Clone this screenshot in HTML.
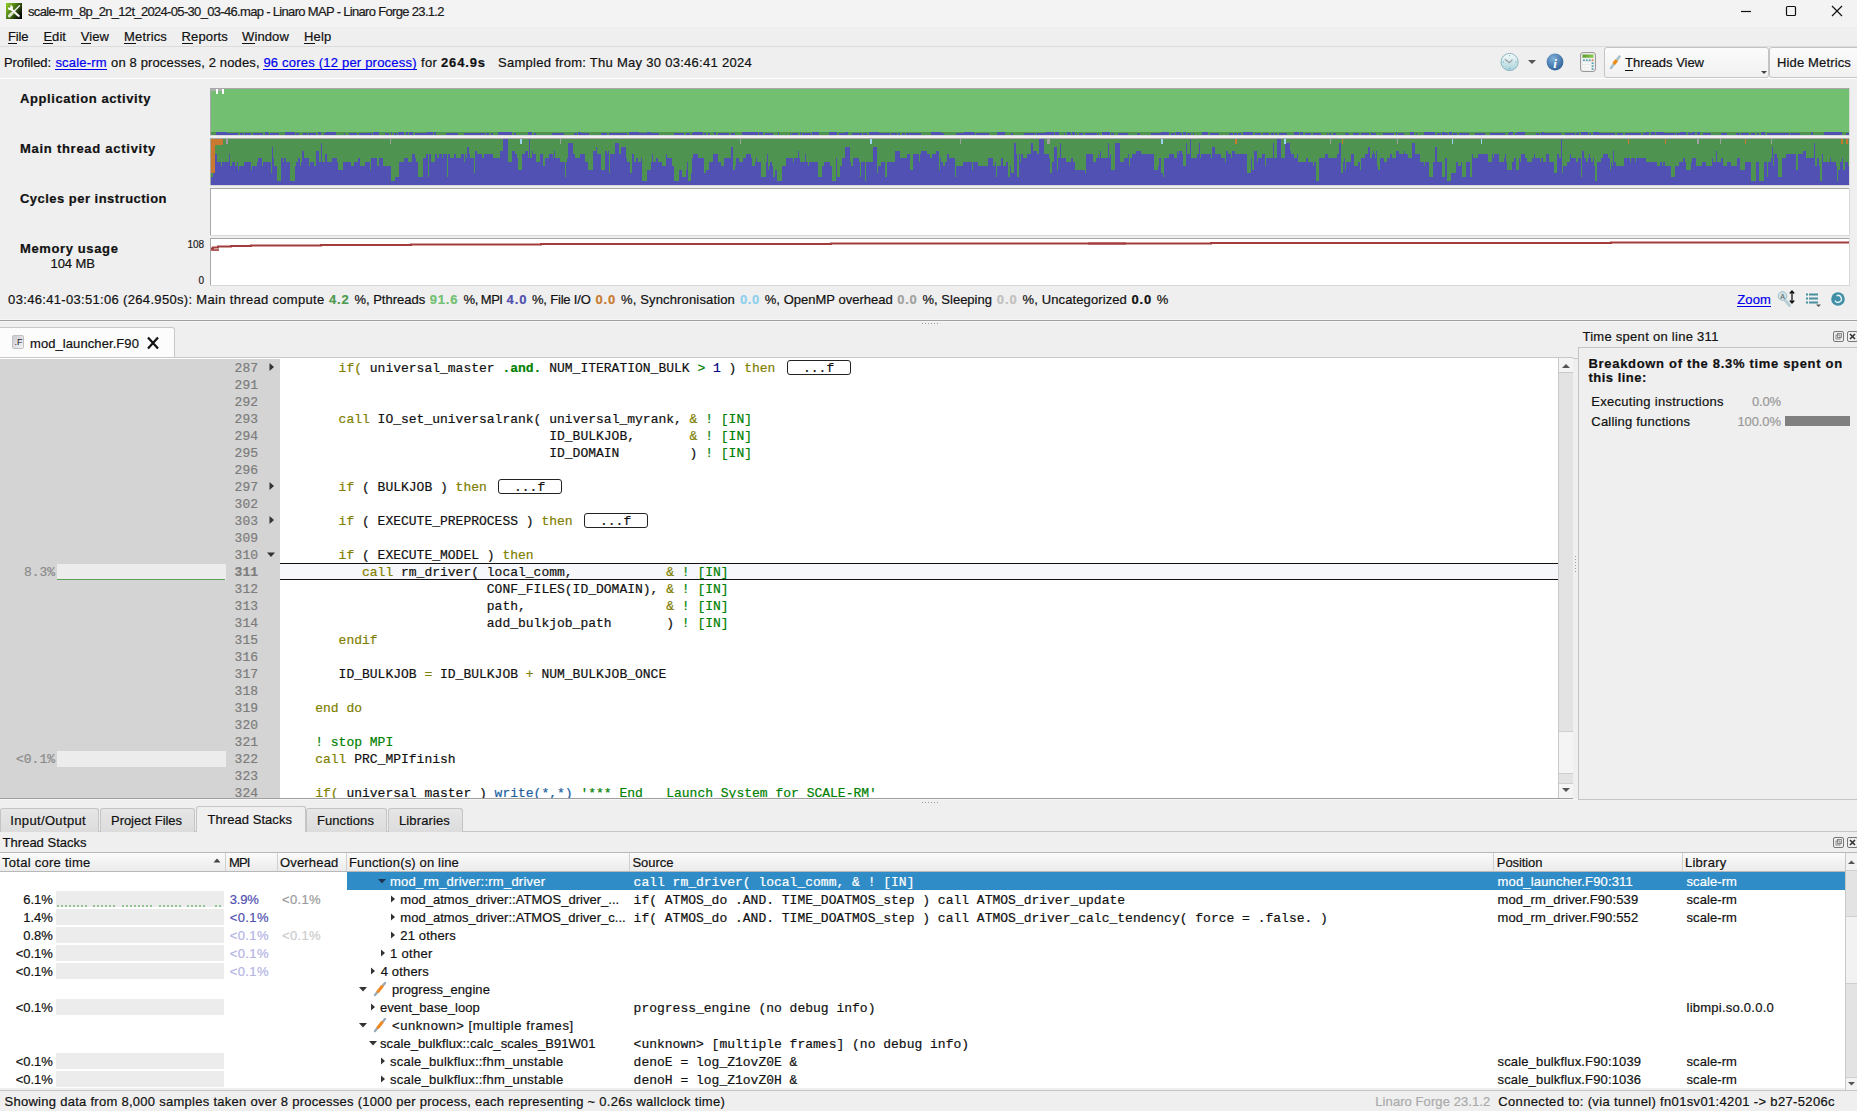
<!DOCTYPE html><html><head><meta charset="utf-8"><style>
html,body{margin:0;padding:0;}
body{width:1857px;height:1111px;position:relative;overflow:hidden;background:#efefef;font-family:"Liberation Sans",sans-serif;font-size:13px;color:#000;}
.t{position:absolute;white-space:pre;-webkit-text-stroke:0.2px currentColor;}
.r{position:absolute;}
svg{position:absolute;}
</style></head><body>
<div class="r" style="left:0px;top:0px;width:1857px;height:27px;background:#f3f3f3;"></div>
<svg style="left:6px;top:3px" width="16" height="16" viewBox="0 0 16 16"><defs><linearGradient id="ig" x1="0" y1="0.2" x2="1" y2="0.8"><stop offset="0" stop-color="#88c420"/><stop offset="0.5" stop-color="#3f6a12"/><stop offset="0.85" stop-color="#111a05"/><stop offset="1" stop-color="#000"/></linearGradient></defs><rect x="0" y="0" width="16" height="16" fill="url(#ig)"/><path d="M4.5 5.5 L13 13.2" stroke="#fff" stroke-width="2.2" stroke-linecap="round"/><circle cx="4.4" cy="4.8" r="2.5" fill="#fff"/><circle cx="3.3" cy="3.5" r="1.25" fill="#6a9c1c"/><circle cx="13.2" cy="13.4" r="0.6" fill="#555"/><path d="M13.5 2.8 L8.5 7.8" stroke="#f0f0f0" stroke-width="1.4" stroke-linecap="round"/><path d="M6.2 10.2 L3.4 12.9" stroke="#d8e4c8" stroke-width="3" stroke-linecap="round"/></svg>
<div class="t" style="left:28.00px;top:4.99px;font-size:13px;line-height:13px;color:#1a1a1a;letter-spacing:-0.676px;">scale-rm_8p_2n_12t_2024-05-30_03-46.map - Linaro MAP - Linaro Forge 23.1.2</div>
<svg style="left:1735px;top:2px" width="122" height="20" viewBox="0 0 122 20"><path d="M6 9.5 H16" stroke="#111" stroke-width="1.2"/><rect x="51.5" y="4.5" width="9" height="9" rx="1" fill="none" stroke="#111" stroke-width="1.2"/><path d="M97 4 L107 14 M107 4 L97 14" stroke="#111" stroke-width="1.2"/></svg>
<div class="r" style="left:0px;top:27px;width:1857px;height:19px;background:#efefef;"></div>
<div class="t" style="left:8.00px;top:29.99px;font-size:13px;line-height:13px;color:#111;letter-spacing:-0.138px;">File</div>
<div class="r" style="left:8px;top:43px;width:9px;height:1px;background:#111;"></div>
<div class="t" style="left:43.40px;top:29.99px;font-size:13px;line-height:13px;color:#111;letter-spacing:0.048px;">Edit</div>
<div class="r" style="left:43px;top:43px;width:10px;height:1px;background:#111;"></div>
<div class="t" style="left:80.80px;top:29.99px;font-size:13px;line-height:13px;color:#111;letter-spacing:0.062px;">View</div>
<div class="r" style="left:81px;top:43px;width:10px;height:1px;background:#111;"></div>
<div class="t" style="left:124.00px;top:29.99px;font-size:13px;line-height:13px;color:#111;letter-spacing:0.158px;">Metrics</div>
<div class="r" style="left:124px;top:43px;width:12px;height:1px;background:#111;"></div>
<div class="t" style="left:181.60px;top:29.99px;font-size:13px;line-height:13px;color:#111;letter-spacing:0.124px;">Reports</div>
<div class="r" style="left:182px;top:43px;width:11px;height:1px;background:#111;"></div>
<div class="t" style="left:242.00px;top:29.99px;font-size:13px;line-height:13px;color:#111;letter-spacing:0.125px;">Window</div>
<div class="r" style="left:242px;top:43px;width:13px;height:1px;background:#111;"></div>
<div class="t" style="left:304.00px;top:29.99px;font-size:13px;line-height:13px;color:#111;letter-spacing:0.188px;">Help</div>
<div class="r" style="left:304px;top:43px;width:11px;height:1px;background:#111;"></div>
<div class="r" style="left:0px;top:46px;width:1857px;height:1px;background:#dcdcdc;"></div>
<div class="t" style="left:4.00px;top:55.99px;font-size:13px;line-height:13px;color:#111;letter-spacing:-0.078px;">Profiled:</div>
<div class="t" style="left:55.40px;top:55.99px;font-size:13px;line-height:13px;color:#0000ee;letter-spacing:0.195px;">scale-rm</div>
<div class="r" style="left:55px;top:69px;width:52px;height:1px;background:#0000ee;"></div>
<div class="t" style="left:111.00px;top:55.99px;font-size:13px;line-height:13px;color:#111;letter-spacing:0.146px;">on 8 processes, 2 nodes,</div>
<div class="t" style="left:263.40px;top:55.99px;font-size:13px;line-height:13px;color:#0000ee;letter-spacing:0.206px;">96 cores (12 per process)</div>
<div class="r" style="left:263px;top:69px;width:154px;height:1px;background:#0000ee;"></div>
<div class="t" style="left:421.00px;top:55.99px;font-size:13px;line-height:13px;color:#111;letter-spacing:0.276px;">for</div>
<div class="t" style="left:441.00px;top:55.99px;font-size:13px;line-height:13px;color:#111;font-weight:bold;letter-spacing:0.836px;">264.9s</div>
<div class="t" style="left:498.00px;top:55.99px;font-size:13px;line-height:13px;color:#111;letter-spacing:0.280px;">Sampled from: Thu May 30 03:46:41 2024</div>
<svg style="left:1500px;top:52px" width="100" height="22" viewBox="0 0 100 22"><defs><linearGradient id="cg" x1="0" y1="0" x2="0" y2="1"><stop offset="0" stop-color="#fafdfd"/><stop offset="1" stop-color="#a6d2da"/></linearGradient><radialGradient id="ib" cx="0.4" cy="0.3" r="0.8"><stop offset="0" stop-color="#7fb0da"/><stop offset="1" stop-color="#23598e"/></radialGradient></defs><circle cx="9.6" cy="10" r="8.6" fill="url(#cg)" stroke="#7fb0b8" stroke-width="0.9"/><path d="M4.8 7.2 L9.4 10.7 L12.5 7.6" stroke="#999" stroke-width="1.1" fill="none"/><path d="M9.6 3 V4.2 M9.6 15.8 V17 M2.8 10 H4 M15.2 10 H16.4" stroke="#5a9aa6" stroke-width="0.8"/><path d="M28 8 L36 8 L32 12 Z" fill="#555"/><circle cx="55" cy="10" r="8.4" fill="url(#ib)"/><text x="55" y="15.5" font-family="Liberation Serif" font-style="italic" font-weight="bold" font-size="13" fill="#fff" text-anchor="middle">i</text><linearGradient id="cs" x1="0" y1="0" x2="1" y2="0"><stop offset="0" stop-color="#5a9a2a"/><stop offset="1" stop-color="#8ccc4a"/></linearGradient><rect x="80.5" y="0.5" width="15" height="19" rx="2.5" fill="#ececec" stroke="#9a9a9a"/><rect x="82.5" y="2.5" width="11" height="3.2" fill="url(#cs)"/><rect x="83.0" y="7.5" width="1.8" height="1.6" fill="#4aa0b0"/><rect x="85.9" y="7.5" width="1.8" height="1.6" fill="#4aa0b0"/><rect x="88.8" y="7.5" width="1.8" height="1.6" fill="#4aa0b0"/><rect x="91.7" y="7.5" width="1.8" height="1.6" fill="#e07a3a"/><rect x="83.0" y="10.4" width="1.8" height="1.6" fill="#ffffff"/><rect x="85.9" y="10.4" width="1.8" height="1.6" fill="#ffffff"/><rect x="88.8" y="10.4" width="1.8" height="1.6" fill="#ffffff"/><rect x="91.7" y="10.4" width="1.8" height="1.6" fill="#4aa0b0"/><rect x="83.0" y="13.3" width="1.8" height="1.6" fill="#ffffff"/><rect x="85.9" y="13.3" width="1.8" height="1.6" fill="#ffffff"/><rect x="88.8" y="13.3" width="1.8" height="1.6" fill="#ffffff"/><rect x="91.7" y="13.3" width="1.8" height="1.6" fill="#4aa0b0"/><rect x="83.0" y="16.2" width="1.8" height="1.6" fill="#ffffff"/><rect x="85.9" y="16.2" width="1.8" height="1.6" fill="#ffffff"/><rect x="88.8" y="16.2" width="1.8" height="1.6" fill="#ffffff"/><rect x="91.7" y="16.2" width="1.8" height="1.6" fill="#4aa0b0"/></svg>
<div class="r" style="left:1604px;top:47px;width:165px;height:31px;border:1px solid #c4c4c4;border-radius:3px;box-sizing:border-box;background:linear-gradient(#fbfbfb,#f1f1f1);"></div>
<svg style="left:1608px;top:53px" width="16" height="18" viewBox="0 0 16 18"><path d="M3 15 L11.5 3.5" stroke="#a8c0c8" stroke-width="2.6" stroke-linecap="round"/><path d="M5.8 11 L8.6 7.3" stroke="#f08a10" stroke-width="3.4" stroke-linecap="butt"/></svg>
<div class="t" style="left:1625.00px;top:55.99px;font-size:13px;line-height:13px;color:#111;letter-spacing:-0.022px;">Threads View</div>
<div class="r" style="left:1625px;top:70px;width:8px;height:1px;background:#111;"></div>
<svg style="left:1760px;top:70px" width="8" height="6" viewBox="0 0 8 6"><path d="M1 1 L7 1 L4 4 Z" fill="#444"/></svg>
<div class="r" style="left:1769px;top:47px;width:100px;height:31px;border:1px solid #c4c4c4;border-radius:3px;box-sizing:border-box;background:linear-gradient(#fbfbfb,#f1f1f1);"></div>
<div class="t" style="left:1777.00px;top:55.99px;font-size:13px;line-height:13px;color:#111;letter-spacing:0.146px;">Hide Metrics</div>
<div class="r" style="left:0px;top:78px;width:1857px;height:1px;background:#ffffff;"></div>
<div class="t" style="left:20.00px;top:92.49px;font-size:13px;line-height:13px;color:#111;font-weight:bold;letter-spacing:0.591px;">Application activity</div>
<div class="t" style="left:20.00px;top:142.49px;font-size:13px;line-height:13px;color:#111;font-weight:bold;letter-spacing:0.731px;">Main thread activity</div>
<div class="t" style="left:20.00px;top:192.49px;font-size:13px;line-height:13px;color:#111;font-weight:bold;letter-spacing:0.475px;">Cycles per instruction</div>
<div class="t" style="left:20.00px;top:242.49px;font-size:13px;line-height:13px;color:#111;font-weight:bold;letter-spacing:0.621px;">Memory usage</div>
<div class="t" style="left:50.50px;top:256.99px;font-size:13px;line-height:13px;color:#111;letter-spacing:-0.052px;">104 MB</div>
<div class="t" style="left:187.50px;top:239.53px;font-size:10px;line-height:10px;color:#222;letter-spacing:-0.062px;">108</div>
<div class="t" style="left:198.50px;top:275.53px;font-size:10px;line-height:10px;color:#222;letter-spacing:-0.062px;">0</div>
<div class="r" style="left:210px;top:88px;width:1640px;height:48px;background:#d8d8d8;"></div>
<div class="r" style="left:210px;top:88px;width:1639px;height:1px;background:#a8a8a8;"></div>
<div class="r" style="left:210px;top:88px;width:1px;height:47px;background:#a8a8a8;"></div>
<div class="r" style="left:211px;top:89px;width:1638px;height:46px;background:#ffffff;"></div>
<div class="r" style="left:210px;top:138px;width:1640px;height:48px;background:#d8d8d8;"></div>
<div class="r" style="left:210px;top:138px;width:1639px;height:1px;background:#a8a8a8;"></div>
<div class="r" style="left:210px;top:138px;width:1px;height:47px;background:#a8a8a8;"></div>
<div class="r" style="left:211px;top:139px;width:1638px;height:46px;background:#ffffff;"></div>
<div class="r" style="left:210px;top:188px;width:1640px;height:48px;background:#d8d8d8;"></div>
<div class="r" style="left:210px;top:188px;width:1639px;height:1px;background:#a8a8a8;"></div>
<div class="r" style="left:210px;top:188px;width:1px;height:47px;background:#a8a8a8;"></div>
<div class="r" style="left:211px;top:189px;width:1638px;height:46px;background:#ffffff;"></div>
<div class="r" style="left:210px;top:238px;width:1640px;height:48px;background:#d8d8d8;"></div>
<div class="r" style="left:210px;top:238px;width:1639px;height:1px;background:#a8a8a8;"></div>
<div class="r" style="left:210px;top:238px;width:1px;height:47px;background:#a8a8a8;"></div>
<div class="r" style="left:211px;top:239px;width:1638px;height:46px;background:#ffffff;"></div>
<svg style="left:211px;top:89px" width="1638" height="46" viewBox="0 0 1638 46" shape-rendering="crispEdges"><rect x="0" y="0" width="1638" height="46" fill="#72bf72"/><rect x="0" y="43" width="1638" height="3" fill="#4f9350"/><path fill="#5151b3" d="M5 43h8v3h-8zM13 43h3v3h-3zM16 44h1v2h-1zM17 44h1v2h-1zM18 44h2v2h-2zM20 44h6v2h-6zM26 44h1v2h-1zM29 44h2v2h-2zM31 44h1v2h-1zM33 44h1v2h-1zM34 44h6v2h-6zM42 44h10v2h-10zM54 43h3v3h-3zM57 44h1v2h-1zM59 44h8v2h-8zM67 44h1v2h-1zM74 43h10v3h-10zM85 44h3v2h-3zM92 44h4v2h-4zM97 44h8v2h-8zM107 43h3v3h-3zM113 44h2v2h-2zM115 43h10v3h-10zM133 44h1v2h-1zM138 44h8v2h-8zM148 44h2v2h-2zM150 44h8v2h-8zM158 44h3v2h-3zM162 43h6v3h-6zM174 44h4v2h-4zM180 43h1v3h-1zM183 44h2v2h-2zM185 44h1v2h-1zM187 43h6v3h-6zM195 43h2v3h-2zM198 43h4v3h-4zM204 44h4v2h-4zM208 44h8v2h-8zM216 43h6v3h-6zM223 43h2v3h-2zM235 44h6v2h-6zM241 44h6v2h-6zM253 44h10v2h-10zM263 44h2v2h-2zM265 44h1v2h-1zM266 44h8v2h-8zM275 44h3v2h-3zM280 44h2v2h-2zM287 43h10v3h-10zM297 43h4v3h-4zM303 44h2v2h-2zM317 43h4v3h-4zM323 44h2v2h-2zM341 44h6v2h-6zM347 44h6v2h-6zM363 44h3v2h-3zM367 43h3v3h-3zM370 44h8v2h-8zM390 44h6v2h-6zM398 44h10v2h-10zM408 44h2v2h-2zM410 44h6v2h-6zM418 43h10v3h-10zM428 44h2v2h-2zM430 44h6v2h-6zM436 43h4v3h-4zM440 44h8v2h-8zM463 44h10v2h-10zM475 44h4v2h-4zM481 44h1v2h-1zM482 43h10v3h-10zM493 44h2v2h-2zM497 44h2v2h-2zM503 43h2v3h-2zM507 44h3v2h-3zM510 44h8v2h-8zM520 44h4v2h-4zM531 43h10v3h-10zM541 43h3v3h-3zM544 43h3v3h-3zM548 43h4v3h-4zM554 44h8v2h-8zM567 43h1v3h-1zM579 44h1v2h-1zM581 44h6v2h-6zM589 43h1v3h-1zM591 44h6v2h-6zM597 44h3v2h-3zM601 43h1v3h-1zM602 43h6v3h-6zM618 43h8v3h-8zM628 44h6v2h-6zM634 43h3v3h-3zM641 44h10v2h-10zM652 44h4v2h-4zM658 43h10v3h-10zM668 44h8v2h-8zM676 44h3v2h-3zM680 44h6v2h-6zM687 44h2v2h-2zM691 44h1v2h-1zM692 44h2v2h-2zM695 44h10v2h-10zM705 44h4v2h-4zM709 44h1v2h-1zM720 43h10v3h-10zM730 44h3v2h-3zM745 44h8v2h-8zM753 43h10v3h-10zM763 44h1v2h-1zM765 44h1v2h-1zM766 44h8v2h-8zM774 44h4v2h-4zM786 43h8v3h-8zM800 44h2v2h-2zM813 44h10v2h-10zM823 44h1v2h-1zM825 44h6v2h-6zM831 44h4v2h-4zM835 43h8v3h-8zM844 43h4v3h-4zM853 44h1v2h-1zM856 43h3v3h-3zM859 44h1v2h-1zM861 43h3v3h-3zM865 44h1v2h-1zM868 44h4v2h-4zM874 44h8v2h-8zM882 44h4v2h-4zM887 44h1v2h-1zM891 43h8v3h-8zM900 44h3v2h-3zM907 44h10v2h-10zM926 44h3v2h-3zM940 44h10v2h-10zM950 43h8v3h-8zM960 44h4v2h-4zM965 43h4v3h-4zM969 44h2v2h-2zM972 43h3v3h-3zM976 44h4v2h-4zM982 44h1v2h-1zM991 43h6v3h-6zM999 44h4v2h-4zM1003 44h2v2h-2zM1005 44h3v2h-3zM1018 44h4v2h-4zM1023 44h3v2h-3zM1027 44h2v2h-2zM1029 44h1v2h-1zM1032 43h8v3h-8zM1040 43h2v3h-2zM1044 44h6v2h-6zM1052 44h4v2h-4zM1056 44h2v2h-2zM1060 44h1v2h-1zM1061 44h2v2h-2zM1064 44h2v2h-2zM1068 44h8v2h-8zM1083 43h4v3h-4zM1087 43h1v3h-1zM1089 43h3v3h-3zM1094 44h6v2h-6zM1102 44h8v2h-8zM1116 44h1v2h-1zM1118 44h2v2h-2zM1122 44h3v2h-3zM1134 44h2v2h-2zM1136 44h2v2h-2zM1142 44h6v2h-6zM1150 44h8v2h-8zM1160 43h1v3h-1zM1161 44h4v2h-4zM1172 44h8v2h-8zM1180 44h3v2h-3zM1185 43h1v3h-1zM1187 44h3v2h-3zM1190 44h3v2h-3zM1199 43h4v3h-4zM1205 44h1v2h-1zM1213 43h3v3h-3zM1216 43h8v3h-8zM1226 44h1v2h-1zM1227 44h3v2h-3zM1231 43h3v3h-3zM1234 44h3v2h-3zM1238 43h3v3h-3zM1242 44h4v2h-4zM1248 44h10v2h-10zM1264 44h10v2h-10zM1279 44h3v2h-3zM1282 44h4v2h-4zM1286 44h8v2h-8zM1297 44h1v2h-1zM1298 43h4v3h-4zM1304 44h2v2h-2zM1306 43h8v3h-8zM1325 44h3v2h-3zM1329 44h2v2h-2zM1331 43h2v3h-2zM1333 44h3v2h-3zM1336 44h6v2h-6zM1342 44h8v2h-8zM1354 44h10v2h-10zM1365 44h2v2h-2zM1367 43h1v3h-1zM1370 43h6v3h-6zM1376 43h1v3h-1zM1378 44h2v2h-2zM1382 43h6v3h-6zM1388 44h10v2h-10zM1398 44h6v2h-6zM1406 44h6v2h-6zM1414 44h8v2h-8zM1422 44h8v2h-8zM1432 44h3v2h-3zM1435 43h3v3h-3zM1440 43h4v3h-4zM1445 43h8v3h-8zM1453 44h1v2h-1zM1454 44h10v2h-10zM1465 44h4v2h-4zM1469 43h6v3h-6zM1477 43h1v3h-1zM1478 44h2v2h-2zM1480 44h1v2h-1zM1481 43h3v3h-3zM1486 43h3v3h-3zM1492 44h8v2h-8zM1510 44h2v2h-2zM1512 44h4v2h-4zM1525 44h4v2h-4zM1530 44h8v2h-8zM1540 44h4v2h-4zM1546 44h2v2h-2zM1550 43h4v3h-4zM1556 44h10v2h-10zM1566 44h1v2h-1zM1567 44h10v2h-10zM1577 44h1v2h-1zM1579 44h10v2h-10zM1600 43h2v3h-2zM1613 43h8v3h-8zM1621 43h10v3h-10zM1635 44h3v2h-3z"/><rect x="0" y="0" width="12" height="2" fill="#b0b0b0"/><rect x="5" y="0" width="2" height="5" fill="#ffffff"/><rect x="11" y="0" width="2" height="5" fill="#ffffff"/></svg>
<svg style="left:211px;top:139px" width="1638" height="46" viewBox="0 0 1638 46" shape-rendering="crispEdges"><rect x="0" y="0" width="1638" height="46" fill="#4f9350"/><path fill="#5151b3" d="M0 38h2v8h-2zM2 15h4v31h-4zM6 23h4v23h-4zM10 27h1v19h-1zM11 23h1v23h-1zM12 23h3v23h-3zM15 23h3v23h-3zM18 15h1v31h-1zM19 27h2v19h-2zM21 23h3v23h-3zM24 27h2v19h-2zM26 23h1v23h-1zM27 31h1v15h-1zM28 27h3v19h-3zM31 27h1v19h-1zM32 27h1v19h-1zM33 23h5v23h-5zM38 23h2v23h-2zM40 31h1v15h-1zM41 27h5v19h-5zM46 23h1v23h-1zM47 19h4v27h-4zM51 27h1v19h-1zM52 23h4v23h-4zM56 23h4v23h-4zM60 34h1v12h-1zM61 8h1v38h-1zM62 19h1v27h-1zM63 27h1v19h-1zM64 27h2v19h-2zM66 42h4v4h-4zM70 19h2v27h-2zM72 23h1v23h-1zM73 19h2v27h-2zM75 23h4v23h-4zM79 42h5v4h-5zM84 27h1v19h-1zM85 23h2v23h-2zM87 19h1v27h-1zM88 19h1v27h-1zM89 27h1v19h-1zM90 23h1v23h-1zM91 12h2v34h-2zM93 19h1v27h-1zM94 19h4v27h-4zM98 27h1v19h-1zM99 23h1v23h-1zM100 23h1v23h-1zM101 23h2v23h-2zM103 27h2v19h-2zM105 12h3v34h-3zM108 23h2v23h-2zM110 4h1v42h-1zM111 23h1v23h-1zM112 23h2v23h-2zM114 15h2v31h-2zM116 23h5v23h-5zM121 19h5v27h-5zM126 23h1v23h-1zM127 31h5v15h-5zM132 23h5v23h-5zM137 23h3v23h-3zM140 27h1v19h-1zM141 27h2v19h-2zM143 23h4v23h-4zM147 19h1v27h-1zM148 19h1v27h-1zM149 27h5v19h-5zM154 23h5v23h-5zM159 31h1v15h-1zM160 19h2v27h-2zM162 19h1v27h-1zM163 19h3v27h-3zM166 27h1v19h-1zM167 27h1v19h-1zM168 19h4v27h-4zM172 27h2v19h-2zM174 27h4v19h-4zM178 27h2v19h-2zM180 42h4v4h-4zM184 38h4v8h-4zM188 23h2v23h-2zM190 23h3v23h-3zM193 19h2v27h-2zM195 19h2v27h-2zM197 23h4v23h-4zM201 15h3v31h-3zM204 19h1v27h-1zM205 23h2v23h-2zM207 38h5v8h-5zM212 19h3v27h-3zM215 15h2v31h-2zM217 38h1v8h-1zM218 15h2v31h-2zM220 23h4v23h-4zM224 15h2v31h-2zM226 19h2v27h-2zM228 15h1v31h-1zM229 15h2v31h-2zM231 19h1v27h-1zM232 15h4v31h-4zM236 38h1v8h-1zM237 15h2v31h-2zM239 19h4v27h-4zM243 15h2v31h-2zM245 19h5v27h-5zM250 15h3v31h-3zM253 23h1v23h-1zM254 15h1v31h-1zM255 19h1v27h-1zM256 8h2v38h-2zM258 15h1v31h-1zM259 19h4v27h-4zM263 34h1v12h-1zM264 12h2v34h-2zM266 15h5v31h-5zM271 19h2v27h-2zM273 15h1v31h-1zM274 15h2v31h-2zM276 15h1v31h-1zM277 15h5v31h-5zM282 19h4v27h-4zM286 19h3v27h-3zM289 12h3v34h-3zM292 0h5v46h-5zM297 23h4v23h-4zM301 12h3v34h-3zM304 15h2v31h-2zM306 19h1v27h-1zM307 31h4v15h-4zM311 15h3v31h-3zM314 12h3v34h-3zM317 19h1v27h-1zM318 0h1v46h-1zM319 19h2v27h-2zM321 12h1v34h-1zM322 15h1v31h-1zM323 15h1v31h-1zM324 15h1v31h-1zM325 23h4v23h-4zM329 15h3v31h-3zM332 27h2v19h-2zM334 19h3v27h-3zM337 19h1v27h-1zM338 15h4v31h-4zM342 19h1v27h-1zM343 12h1v34h-1zM344 19h5v27h-5zM349 23h4v23h-4zM353 23h1v23h-1zM354 38h1v8h-1zM355 23h1v23h-1zM356 19h1v27h-1zM357 4h5v42h-5zM362 15h1v31h-1zM363 15h1v31h-1zM364 19h5v27h-5zM369 15h5v31h-5zM374 23h3v23h-3zM377 31h5v15h-5zM382 12h3v34h-3zM385 8h1v38h-1zM386 15h4v31h-4zM390 31h4v15h-4zM394 12h2v34h-2zM396 15h1v31h-1zM397 12h1v34h-1zM398 34h1v12h-1zM399 15h5v31h-5zM404 4h4v42h-4zM408 15h2v31h-2zM410 8h5v38h-5zM415 19h1v27h-1zM416 23h3v23h-3zM419 34h2v12h-2zM421 15h2v31h-2zM423 23h2v23h-2zM425 19h1v27h-1zM426 19h1v27h-1zM427 23h3v23h-3zM430 19h1v27h-1zM431 42h5v4h-5zM436 31h4v15h-4zM440 23h1v23h-1zM441 15h1v31h-1zM442 23h3v23h-3zM445 19h1v27h-1zM446 19h1v27h-1zM447 23h4v23h-4zM451 27h2v19h-2zM453 27h2v19h-2zM455 15h1v31h-1zM456 19h5v27h-5zM461 27h2v19h-2zM463 42h5v4h-5zM468 31h3v15h-3zM471 38h4v8h-4zM475 31h1v15h-1zM476 23h1v23h-1zM477 42h3v4h-3zM480 34h1v12h-1zM481 19h1v27h-1zM482 15h5v31h-5zM487 19h1v27h-1zM488 19h5v27h-5zM493 34h2v12h-2zM495 31h3v15h-3zM498 23h3v23h-3zM501 23h1v23h-1zM502 15h5v31h-5zM507 23h3v23h-3zM510 27h2v19h-2zM512 27h1v19h-1zM513 19h1v27h-1zM514 19h5v27h-5zM519 19h1v27h-1zM520 8h2v38h-2zM522 31h2v15h-2zM524 27h1v19h-1zM525 19h1v27h-1zM526 19h2v27h-2zM528 23h4v23h-4zM532 19h3v27h-3zM535 15h5v31h-5zM540 19h1v27h-1zM541 27h3v19h-3zM544 23h1v23h-1zM545 19h1v27h-1zM546 23h3v23h-3zM549 23h1v23h-1zM550 38h5v8h-5zM555 23h1v23h-1zM556 15h1v31h-1zM557 31h1v15h-1zM558 27h1v19h-1zM559 23h2v23h-2zM561 27h1v19h-1zM562 38h2v8h-2zM564 31h2v15h-2zM566 42h5v4h-5zM571 27h4v19h-4zM575 19h1v27h-1zM576 19h3v27h-3zM579 19h3v27h-3zM582 23h1v23h-1zM583 19h4v27h-4zM587 12h1v34h-1zM588 19h1v27h-1zM589 23h5v23h-5zM594 15h1v31h-1zM595 23h2v23h-2zM597 27h1v19h-1zM598 23h1v23h-1zM599 23h1v23h-1zM600 23h2v23h-2zM602 23h5v23h-5zM607 38h4v8h-4zM611 27h2v19h-2zM613 23h4v23h-4zM617 23h2v23h-2zM619 27h2v19h-2zM621 42h4v4h-4zM625 19h1v27h-1zM626 38h3v8h-3zM629 27h2v19h-2zM631 19h3v27h-3zM634 8h5v38h-5zM639 23h1v23h-1zM640 27h2v19h-2zM642 19h1v27h-1zM643 19h5v27h-5zM648 23h1v23h-1zM649 38h1v8h-1zM650 23h4v23h-4zM654 42h1v4h-1zM655 23h3v23h-3zM658 23h4v23h-4zM662 8h4v38h-4zM666 34h1v12h-1zM667 27h3v19h-3zM670 23h3v23h-3zM673 23h1v23h-1zM674 38h2v8h-2zM676 23h4v23h-4zM680 23h4v23h-4zM684 12h5v34h-5zM689 19h1v27h-1zM690 19h1v27h-1zM691 19h5v27h-5zM696 15h1v31h-1zM697 15h2v31h-2zM699 31h3v15h-3zM702 15h4v31h-4zM706 15h2v31h-2zM708 23h1v23h-1zM709 15h1v31h-1zM710 12h2v34h-2zM712 12h4v34h-4zM716 15h2v31h-2zM718 15h1v31h-1zM719 19h1v27h-1zM720 19h1v27h-1zM721 15h4v31h-4zM725 12h3v34h-3zM728 31h1v15h-1zM729 19h1v27h-1zM730 23h1v23h-1zM731 23h1v23h-1zM732 27h1v19h-1zM733 27h1v19h-1zM734 23h2v23h-2zM736 15h2v31h-2zM738 19h4v27h-4zM742 19h2v27h-2zM744 38h1v8h-1zM745 27h3v19h-3zM748 27h4v19h-4zM752 23h3v23h-3zM755 23h3v23h-3zM758 23h3v23h-3zM761 31h1v15h-1zM762 23h5v23h-5zM767 27h3v19h-3zM770 27h2v19h-2zM772 27h5v19h-5zM777 19h5v27h-5zM782 27h2v19h-2zM784 23h1v23h-1zM785 38h1v8h-1zM786 27h4v19h-4zM790 19h2v27h-2zM792 27h3v19h-3zM795 23h2v23h-2zM797 38h2v8h-2zM799 27h1v19h-1zM800 34h3v12h-3zM803 4h2v42h-2zM805 15h1v31h-1zM806 38h2v8h-2zM808 15h1v31h-1zM809 23h1v23h-1zM810 15h2v31h-2zM812 19h4v27h-4zM816 15h1v31h-1zM817 15h1v31h-1zM818 15h2v31h-2zM820 4h2v42h-2zM822 12h4v34h-4zM826 15h2v31h-2zM828 0h5v46h-5zM833 15h5v31h-5zM838 19h1v27h-1zM839 34h2v12h-2zM841 23h2v23h-2zM843 8h3v38h-3zM846 31h1v15h-1zM847 19h2v27h-2zM849 4h1v42h-1zM850 19h1v27h-1zM851 19h4v27h-4zM855 23h5v23h-5zM860 19h2v27h-2zM862 23h2v23h-2zM864 31h5v15h-5zM869 31h5v15h-5zM874 34h1v12h-1zM875 15h5v31h-5zM880 15h2v31h-2zM882 23h2v23h-2zM884 23h1v23h-1zM885 19h2v27h-2zM887 15h1v31h-1zM888 19h1v27h-1zM889 12h1v34h-1zM890 19h3v27h-3zM893 19h2v27h-2zM895 19h2v27h-2zM897 4h1v42h-1zM898 19h1v27h-1zM899 15h1v31h-1zM900 31h4v15h-4zM904 4h5v42h-5zM909 23h4v23h-4zM913 19h4v27h-4zM917 15h1v31h-1zM918 27h1v19h-1zM919 19h2v27h-2zM921 15h4v31h-4zM925 12h4v34h-4zM929 12h1v34h-1zM930 15h4v31h-4zM934 15h2v31h-2zM936 15h2v31h-2zM938 15h1v31h-1zM939 15h4v31h-4zM943 31h4v15h-4zM947 27h1v19h-1zM948 19h2v27h-2zM950 34h2v12h-2zM952 38h1v8h-1zM953 19h4v27h-4zM957 19h1v27h-1zM958 15h5v31h-5zM963 19h2v27h-2zM965 19h1v27h-1zM966 12h1v34h-1zM967 15h1v31h-1zM968 12h2v34h-2zM970 12h1v34h-1zM971 15h1v31h-1zM972 27h3v19h-3zM975 4h1v42h-1zM976 15h1v31h-1zM977 15h2v31h-2zM979 0h1v46h-1zM980 19h2v27h-2zM982 19h4v27h-4zM986 15h2v31h-2zM988 4h1v42h-1zM989 19h1v27h-1zM990 15h4v31h-4zM994 15h5v31h-5zM999 15h1v31h-1zM1000 19h1v27h-1zM1001 8h3v38h-3zM1004 15h3v31h-3zM1007 15h2v31h-2zM1009 15h1v31h-1zM1010 19h4v27h-4zM1014 23h1v23h-1zM1015 12h2v34h-2zM1017 15h3v31h-3zM1020 19h1v27h-1zM1021 12h3v34h-3zM1024 15h4v31h-4zM1028 15h5v31h-5zM1033 15h3v31h-3zM1036 34h4v12h-4zM1040 19h1v27h-1zM1041 31h2v15h-2zM1043 12h3v34h-3zM1046 23h1v23h-1zM1047 19h4v27h-4zM1051 15h3v31h-3zM1054 27h1v19h-1zM1055 19h1v27h-1zM1056 19h2v27h-2zM1058 19h1v27h-1zM1059 19h3v27h-3zM1062 4h1v42h-1zM1063 19h3v27h-3zM1066 0h4v46h-4zM1070 19h4v27h-4zM1074 4h5v42h-5zM1079 12h1v34h-1zM1080 15h3v31h-3zM1083 19h3v27h-3zM1086 15h1v31h-1zM1087 23h3v23h-3zM1090 23h1v23h-1zM1091 23h2v23h-2zM1093 23h2v23h-2zM1095 19h2v27h-2zM1097 23h2v23h-2zM1099 23h3v23h-3zM1102 27h1v19h-1zM1103 23h2v23h-2zM1105 42h3v4h-3zM1108 19h1v27h-1zM1109 19h5v27h-5zM1114 15h3v31h-3zM1117 19h1v27h-1zM1118 19h4v27h-4zM1122 19h4v27h-4zM1126 15h2v31h-2zM1128 4h2v42h-2zM1130 34h2v12h-2zM1132 23h1v23h-1zM1133 19h1v27h-1zM1134 31h1v15h-1zM1135 23h5v23h-5zM1140 15h3v31h-3zM1143 27h4v19h-4zM1147 23h1v23h-1zM1148 23h1v23h-1zM1149 31h1v15h-1zM1150 19h4v27h-4zM1154 15h3v31h-3zM1157 8h2v38h-2zM1159 19h2v27h-2zM1161 15h1v31h-1zM1162 12h1v34h-1zM1163 15h1v31h-1zM1164 19h1v27h-1zM1165 12h1v34h-1zM1166 27h1v19h-1zM1167 31h2v15h-2zM1169 19h4v27h-4zM1173 23h3v23h-3zM1176 19h3v27h-3zM1179 15h2v31h-2zM1181 19h1v27h-1zM1182 19h1v27h-1zM1183 19h2v27h-2zM1185 12h2v34h-2zM1187 12h1v34h-1zM1188 15h5v31h-5zM1193 12h1v34h-1zM1194 15h3v31h-3zM1197 19h4v27h-4zM1201 4h3v42h-3zM1204 15h2v31h-2zM1206 15h3v31h-3zM1209 23h1v23h-1zM1210 23h2v23h-2zM1212 23h1v23h-1zM1213 27h1v19h-1zM1214 23h4v23h-4zM1218 38h4v8h-4zM1222 23h2v23h-2zM1224 8h2v38h-2zM1226 23h5v23h-5zM1231 38h1v8h-1zM1232 38h2v8h-2zM1234 19h2v27h-2zM1236 42h2v4h-2zM1238 42h2v4h-2zM1240 34h5v12h-5zM1245 23h2v23h-2zM1247 27h3v19h-3zM1250 23h1v23h-1zM1251 38h4v8h-4zM1255 23h4v23h-4zM1259 38h2v8h-2zM1261 15h1v31h-1zM1262 19h5v27h-5zM1267 15h1v31h-1zM1268 15h4v31h-4zM1272 15h5v31h-5zM1277 23h2v23h-2zM1279 23h2v23h-2zM1281 15h1v31h-1zM1282 19h1v27h-1zM1283 15h5v31h-5zM1288 23h5v23h-5zM1293 19h1v27h-1zM1294 15h1v31h-1zM1295 23h1v23h-1zM1296 31h1v15h-1zM1297 31h4v15h-4zM1301 23h2v23h-2zM1303 19h2v27h-2zM1305 31h3v15h-3zM1308 19h1v27h-1zM1309 23h1v23h-1zM1310 15h4v31h-4zM1314 19h2v27h-2zM1316 23h5v23h-5zM1321 19h2v27h-2zM1323 15h1v31h-1zM1324 19h5v27h-5zM1329 23h1v23h-1zM1330 19h2v27h-2zM1332 23h2v23h-2zM1334 23h1v23h-1zM1335 15h2v31h-2zM1337 15h1v31h-1zM1338 23h5v23h-5zM1343 34h3v12h-3zM1346 15h2v31h-2zM1348 19h2v27h-2zM1350 0h1v46h-1zM1351 34h1v12h-1zM1352 27h4v19h-4zM1356 23h3v23h-3zM1359 15h1v31h-1zM1360 19h5v27h-5zM1365 23h2v23h-2zM1367 19h1v27h-1zM1368 19h2v27h-2zM1370 38h1v8h-1zM1371 12h2v34h-2zM1373 19h2v27h-2zM1375 23h2v23h-2zM1377 19h1v27h-1zM1378 15h1v31h-1zM1379 19h1v27h-1zM1380 23h1v23h-1zM1381 23h1v23h-1zM1382 19h1v27h-1zM1383 27h1v19h-1zM1384 42h1v4h-1zM1385 42h1v4h-1zM1386 23h4v23h-4zM1390 19h2v27h-2zM1392 15h5v31h-5zM1397 19h2v27h-2zM1399 31h1v15h-1zM1400 23h1v23h-1zM1401 27h1v19h-1zM1402 12h1v34h-1zM1403 23h2v23h-2zM1405 27h1v19h-1zM1406 27h4v19h-4zM1410 27h1v19h-1zM1411 27h2v19h-2zM1413 19h1v27h-1zM1414 19h5v27h-5zM1419 23h1v23h-1zM1420 19h4v27h-4zM1424 23h1v23h-1zM1425 19h5v27h-5zM1430 19h1v27h-1zM1431 19h1v27h-1zM1432 19h2v27h-2zM1434 19h1v27h-1zM1435 23h2v23h-2zM1437 23h5v23h-5zM1442 23h1v23h-1zM1443 23h3v23h-3zM1446 27h3v19h-3zM1449 23h2v23h-2zM1451 27h1v19h-1zM1452 23h2v23h-2zM1454 27h3v19h-3zM1457 27h3v19h-3zM1460 38h4v8h-4zM1464 27h1v19h-1zM1465 27h3v19h-3zM1468 23h4v23h-4zM1472 19h2v27h-2zM1474 23h1v23h-1zM1475 31h5v15h-5zM1480 23h1v23h-1zM1481 19h4v27h-4zM1485 27h4v19h-4zM1489 27h2v19h-2zM1491 23h4v23h-4zM1495 27h5v19h-5zM1500 27h1v19h-1zM1501 19h1v27h-1zM1502 23h3v23h-3zM1505 12h1v34h-1zM1506 23h4v23h-4zM1510 19h2v27h-2zM1512 27h4v19h-4zM1516 23h4v23h-4zM1520 27h2v19h-2zM1522 27h1v19h-1zM1523 27h1v19h-1zM1524 27h2v19h-2zM1526 19h3v27h-3zM1529 31h5v15h-5zM1534 23h1v23h-1zM1535 23h5v23h-5zM1540 42h5v4h-5zM1545 23h3v23h-3zM1548 42h5v4h-5zM1553 23h1v23h-1zM1554 23h2v23h-2zM1556 38h1v8h-1zM1557 23h3v23h-3zM1560 19h1v27h-1zM1561 8h1v38h-1zM1562 27h1v19h-1zM1563 15h3v31h-3zM1566 19h1v27h-1zM1567 38h4v8h-4zM1571 19h3v27h-3zM1574 19h1v27h-1zM1575 15h4v31h-4zM1579 15h1v31h-1zM1580 15h1v31h-1zM1581 15h4v31h-4zM1585 31h2v15h-2zM1587 15h2v31h-2zM1589 15h3v31h-3zM1592 12h3v34h-3zM1595 19h3v27h-3zM1598 19h5v27h-5zM1603 4h1v42h-1zM1604 27h2v19h-2zM1606 19h2v27h-2zM1608 27h1v19h-1zM1609 42h2v4h-2zM1611 15h1v31h-1zM1612 23h4v23h-4zM1616 23h3v23h-3zM1619 19h1v27h-1zM1620 23h5v23h-5zM1625 27h1v19h-1zM1626 42h1v4h-1zM1627 31h2v15h-2zM1629 23h2v23h-2zM1631 19h1v27h-1zM1632 31h2v15h-2zM1634 23h3v23h-3zM1637 27h1v19h-1z"/><path fill="#c97a30" d="M0 0h12v6h-8v28h-4z"/><rect x="15" y="0" width="2" height="5" fill="#a99aa8"/><rect x="309" y="0" width="2" height="5" fill="#9ad3ef"/><rect x="349" y="0" width="1" height="5" fill="#a0a0a0"/><rect x="659" y="0" width="2" height="5" fill="#9ad3ef"/><rect x="950" y="0" width="2" height="5" fill="#9ad3ef"/><rect x="836" y="0" width="3" height="5" fill="#a0a0a0"/><rect x="1073" y="0" width="2" height="5" fill="#9ad3ef"/><rect x="1024" y="0" width="2" height="5" fill="#c97a30"/><rect x="1241" y="0" width="1" height="5" fill="#9ad3ef"/><rect x="1417" y="0" width="1" height="5" fill="#c97a30"/><rect x="179" y="0" width="1" height="5" fill="#a0a0a0"/><rect x="529" y="0" width="1" height="5" fill="#a0a0a0"/><rect x="749" y="0" width="1" height="5" fill="#a0a0a0"/><rect x="1119" y="0" width="1" height="5" fill="#a0a0a0"/><rect x="1131" y="0" width="1" height="5" fill="#c97a30"/><rect x="1270" y="0" width="1" height="5" fill="#9ad3ef"/><rect x="1186" y="0" width="1" height="5" fill="#a0a0a0"/><rect x="1454" y="0" width="1" height="5" fill="#c97a30"/><rect x="1486" y="0" width="2" height="5" fill="#a0a0a0"/><rect x="1509" y="0" width="1" height="5" fill="#a0a0a0"/><rect x="1534" y="0" width="1" height="5" fill="#c97a30"/><rect x="1560" y="0" width="1" height="5" fill="#a0a0a0"/><rect x="1630" y="0" width="2" height="5" fill="#c97a30"/><rect x="1635" y="0" width="2" height="5" fill="#c97a30"/></svg>
<svg style="left:211px;top:239px" width="1638" height="46" viewBox="0 0 1638 46"><path d="M0 9.5 H2 V8.5 H7 V7.5 H20 V7 H40 V6.5 H110 V6 H200 V5.5 H330 V5 H620 V4.5 H1000 V4 H1400 V3.5 H1638" stroke="#a33c3c" stroke-width="2" fill="none"/><path d="M0 11 H8" stroke="#a33c3c" stroke-width="1.6" fill="none"/><path d="M877 4.5 H915" stroke="#a33c3c" stroke-width="2" fill="none"/></svg>
<div class="t" style="left:8.10px;top:292.99px;font-size:13px;line-height:13px;color:#111;letter-spacing:0.324px;">03:46:41-03:51:06 (264.950s): Main thread compute</div>
<div class="t" style="left:329.00px;top:292.99px;font-size:13px;line-height:13px;color:#4e9a4e;font-weight:bold;letter-spacing:0.841px;">4.2</div>
<div class="t" style="left:354.40px;top:292.99px;font-size:13px;line-height:13px;color:#111;letter-spacing:-0.003px;">%, Pthreads</div>
<div class="t" style="left:429.70px;top:292.99px;font-size:13px;line-height:13px;color:#72bf72;font-weight:bold;letter-spacing:0.797px;">91.6</div>
<div class="t" style="left:463.60px;top:292.99px;font-size:13px;line-height:13px;color:#111;letter-spacing:-0.515px;">%, MPI</div>
<div class="t" style="left:506.60px;top:292.99px;font-size:13px;line-height:13px;color:#5050b0;font-weight:bold;letter-spacing:0.874px;">4.0</div>
<div class="t" style="left:532.00px;top:292.99px;font-size:13px;line-height:13px;color:#111;letter-spacing:-0.188px;">%, File I/O</div>
<div class="t" style="left:595.50px;top:292.99px;font-size:13px;line-height:13px;color:#c97a30;font-weight:bold;letter-spacing:0.874px;">0.0</div>
<div class="t" style="left:621.00px;top:292.99px;font-size:13px;line-height:13px;color:#111;letter-spacing:0.149px;">%, Synchronisation</div>
<div class="t" style="left:740.00px;top:292.99px;font-size:13px;line-height:13px;color:#8ccfee;font-weight:bold;letter-spacing:0.641px;">0.0</div>
<div class="t" style="left:764.80px;top:292.99px;font-size:13px;line-height:13px;color:#111;letter-spacing:0.016px;">%, OpenMP overhead</div>
<div class="t" style="left:897.30px;top:292.99px;font-size:13px;line-height:13px;color:#a0a0a0;font-weight:bold;letter-spacing:0.741px;">0.0</div>
<div class="t" style="left:922.50px;top:292.99px;font-size:13px;line-height:13px;color:#111;letter-spacing:0.009px;">%, Sleeping</div>
<div class="t" style="left:996.80px;top:292.99px;font-size:13px;line-height:13px;color:#c0c0c0;font-weight:bold;letter-spacing:0.974px;">0.0</div>
<div class="t" style="left:1022.60px;top:292.99px;font-size:13px;line-height:13px;color:#111;letter-spacing:0.110px;">%, Uncategorized</div>
<div class="t" style="left:1131.50px;top:292.99px;font-size:13px;line-height:13px;color:#111;font-weight:bold;letter-spacing:0.807px;">0.0</div>
<div class="t" style="left:1156.70px;top:292.99px;font-size:13px;line-height:13px;color:#111;letter-spacing:-1.263px;">%</div>
<div class="t" style="left:1737.30px;top:293.49px;font-size:13px;line-height:13px;color:#0000ee;letter-spacing:0.091px;">Zoom</div>
<div class="r" style="left:1737px;top:306px;width:34px;height:1px;background:#0000ee;"></div>
<svg style="left:1776px;top:289px" width="80" height="20" viewBox="0 0 80 20"><path d="M9 11 L13.5 16.5" stroke="#b8cfd6" stroke-width="3" stroke-linecap="round"/><circle cx="6.5" cy="7" r="4.3" fill="#cfe3e8" stroke="#9fbfc8" stroke-width="1"/><text x="6.5" y="9.5" font-size="7" font-family="Liberation Sans" fill="#555" text-anchor="middle">A</text><path d="M16 2.5 V13.5 M13.8 4.5 L16 2 L18.2 4.5 M13.8 11.5 L16 14 L18.2 11.5" stroke="#111" stroke-width="1.3" fill="none"/><g fill="#4a8f9f"><rect x="30" y="4.5" width="2" height="2"/><rect x="33" y="4.5" width="9" height="2"/><rect x="30" y="8.5" width="2" height="2"/><rect x="33" y="8.5" width="9" height="2"/><rect x="30" y="12.5" width="2" height="2"/><rect x="33" y="12.5" width="9" height="2"/></g><path d="M40 15.5 L45 15.5 L42.5 18 Z" fill="#555"/><circle cx="62" cy="10" r="6.8" fill="#3f8fa6"/><path d="M59 11.5 A3.4 3.4 0 1 0 60.5 6.8" stroke="#e8f4f7" stroke-width="1.4" fill="none"/></svg>
<div class="r" style="left:0px;top:319px;width:1857px;height:1px;background:#f6f6f6;"></div>
<div class="r" style="left:0px;top:320px;width:1857px;height:1px;background:#a0a0a0;"></div>
<div class="r" style="left:0px;top:321px;width:1857px;height:1px;background:#f6f6f6;"></div>
<div class="r" style="left:922px;top:323px;width:1px;height:1px;background:#9a9a9a;"></div>
<div class="r" style="left:925px;top:323px;width:1px;height:1px;background:#9a9a9a;"></div>
<div class="r" style="left:928px;top:323px;width:1px;height:1px;background:#9a9a9a;"></div>
<div class="r" style="left:931px;top:323px;width:1px;height:1px;background:#9a9a9a;"></div>
<div class="r" style="left:934px;top:323px;width:1px;height:1px;background:#9a9a9a;"></div>
<div class="r" style="left:937px;top:323px;width:1px;height:1px;background:#9a9a9a;"></div>
<div class="r" style="left:922px;top:802px;width:1px;height:1px;background:#9a9a9a;"></div>
<div class="r" style="left:925px;top:802px;width:1px;height:1px;background:#9a9a9a;"></div>
<div class="r" style="left:928px;top:802px;width:1px;height:1px;background:#9a9a9a;"></div>
<div class="r" style="left:931px;top:802px;width:1px;height:1px;background:#9a9a9a;"></div>
<div class="r" style="left:934px;top:802px;width:1px;height:1px;background:#9a9a9a;"></div>
<div class="r" style="left:937px;top:802px;width:1px;height:1px;background:#9a9a9a;"></div>
<div class="r" style="left:0px;top:358px;width:1578px;height:1px;background:#c8c8c8;"></div>
<div class="r" style="left:-1px;top:327px;width:176px;height:32px;background:#fcfcfc;border:1px solid #c8c8c8;border-bottom:none;border-radius:0 3px 0 0;box-sizing:border-box"></div>
<svg style="left:11px;top:334px" width="14" height="16" viewBox="0 0 14 16"><defs><linearGradient id="fg" x1="0" y1="0" x2="1" y2="1"><stop offset="0" stop-color="#c8c8d0"/><stop offset="1" stop-color="#f6f6f8"/></linearGradient></defs><rect x="1.5" y="1.5" width="11" height="13" rx="1.2" fill="url(#fg)" stroke="#c0c0c0"/><text x="7.5" y="11" font-size="9" font-family="Liberation Sans" fill="#222" text-anchor="middle">.F</text></svg>
<div class="t" style="left:30.00px;top:336.99px;font-size:13px;line-height:13px;color:#111;letter-spacing:0.080px;">mod_launcher.F90</div>
<svg style="left:146px;top:336px" width="14" height="14" viewBox="0 0 14 14"><path d="M2 1.5 L12 12.5 M12 1.5 L2 12.5" stroke="#111" stroke-width="2.2"/></svg>
<div class="r" style="left:0px;top:357px;width:1573px;height:1px;background:#c8c8c8;"></div>
<div class="r" style="left:0;top:358px;width:1558px;height:440px;background:#fff;overflow:hidden">
<div class="r" style="left:0px;top:1px;width:280px;height:440px;background:#d4d4d4;"></div>
<div class="r" style="left:280px;top:205px;width:1278px;height:17px;background:#f5f7fa;border-top:1px solid #111;border-bottom:1px solid #111;box-sizing:border-box"></div>
<div class="t" style="left:234.61px;top:4.04px;font-size:13px;line-height:13px;color:#7c7c7c;font-family:'Liberation Mono', monospace;">287</div>
<div class="t" style="left:338.60px;top:4.04px;font-size:13px;line-height:13px;color:#808000;font-family:'Liberation Mono', monospace;">if(</div>
<div class="t" style="left:362.00px;top:4.04px;font-size:13px;line-height:13px;color:#111;font-family:'Liberation Mono', monospace;"> universal_master </div>
<div class="t" style="left:502.40px;top:4.04px;font-size:13px;line-height:13px;color:#008000;font-weight:bold;font-family:'Liberation Mono', monospace;">.and.</div>
<div class="t" style="left:541.40px;top:4.04px;font-size:13px;line-height:13px;color:#111;font-family:'Liberation Mono', monospace;"> NUM_ITERATION_BULK </div>
<div class="t" style="left:697.40px;top:4.04px;font-size:13px;line-height:13px;color:#008000;font-family:'Liberation Mono', monospace;">&gt;</div>
<div class="t" style="left:713.00px;top:4.04px;font-size:13px;line-height:13px;color:#000080;font-family:'Liberation Mono', monospace;">1</div>
<div class="t" style="left:720.80px;top:4.04px;font-size:13px;line-height:13px;color:#111;font-family:'Liberation Mono', monospace;"> )</div>
<div class="t" style="left:744.20px;top:4.04px;font-size:13px;line-height:13px;color:#808000;font-family:'Liberation Mono', monospace;">then</div>
<div class="t" style="left:234.61px;top:21.04px;font-size:13px;line-height:13px;color:#7c7c7c;font-family:'Liberation Mono', monospace;">291</div>
<div class="t" style="left:234.61px;top:38.04px;font-size:13px;line-height:13px;color:#7c7c7c;font-family:'Liberation Mono', monospace;">292</div>
<div class="t" style="left:234.61px;top:55.04px;font-size:13px;line-height:13px;color:#7c7c7c;font-family:'Liberation Mono', monospace;">293</div>
<div class="t" style="left:338.60px;top:55.04px;font-size:13px;line-height:13px;color:#808000;font-family:'Liberation Mono', monospace;">call</div>
<div class="t" style="left:377.60px;top:55.04px;font-size:13px;line-height:13px;color:#111;font-family:'Liberation Mono', monospace;">IO_set_universalrank( universal_myrank,</div>
<div class="t" style="left:689.60px;top:55.04px;font-size:13px;line-height:13px;color:#808000;font-family:'Liberation Mono', monospace;">&amp;</div>
<div class="t" style="left:705.20px;top:55.04px;font-size:13px;line-height:13px;color:#008000;font-family:'Liberation Mono', monospace;">! [IN]</div>
<div class="t" style="left:234.61px;top:72.04px;font-size:13px;line-height:13px;color:#7c7c7c;font-family:'Liberation Mono', monospace;">294</div>
<div class="t" style="left:549.20px;top:72.04px;font-size:13px;line-height:13px;color:#111;font-family:'Liberation Mono', monospace;">ID_BULKJOB,</div>
<div class="t" style="left:689.60px;top:72.04px;font-size:13px;line-height:13px;color:#808000;font-family:'Liberation Mono', monospace;">&amp;</div>
<div class="t" style="left:705.20px;top:72.04px;font-size:13px;line-height:13px;color:#008000;font-family:'Liberation Mono', monospace;">! [IN]</div>
<div class="t" style="left:234.61px;top:89.04px;font-size:13px;line-height:13px;color:#7c7c7c;font-family:'Liberation Mono', monospace;">295</div>
<div class="t" style="left:549.20px;top:89.04px;font-size:13px;line-height:13px;color:#111;font-family:'Liberation Mono', monospace;">ID_DOMAIN</div>
<div class="t" style="left:689.60px;top:89.04px;font-size:13px;line-height:13px;color:#111;font-family:'Liberation Mono', monospace;">)</div>
<div class="t" style="left:705.20px;top:89.04px;font-size:13px;line-height:13px;color:#008000;font-family:'Liberation Mono', monospace;">! [IN]</div>
<div class="t" style="left:234.61px;top:106.04px;font-size:13px;line-height:13px;color:#7c7c7c;font-family:'Liberation Mono', monospace;">296</div>
<div class="t" style="left:234.61px;top:123.04px;font-size:13px;line-height:13px;color:#7c7c7c;font-family:'Liberation Mono', monospace;">297</div>
<div class="t" style="left:338.60px;top:123.04px;font-size:13px;line-height:13px;color:#808000;font-family:'Liberation Mono', monospace;">if</div>
<div class="t" style="left:362.00px;top:123.04px;font-size:13px;line-height:13px;color:#111;font-family:'Liberation Mono', monospace;">( BULKJOB )</div>
<div class="t" style="left:455.60px;top:123.04px;font-size:13px;line-height:13px;color:#808000;font-family:'Liberation Mono', monospace;">then</div>
<div class="t" style="left:234.61px;top:140.04px;font-size:13px;line-height:13px;color:#7c7c7c;font-family:'Liberation Mono', monospace;">302</div>
<div class="t" style="left:234.61px;top:157.04px;font-size:13px;line-height:13px;color:#7c7c7c;font-family:'Liberation Mono', monospace;">303</div>
<div class="t" style="left:338.60px;top:157.04px;font-size:13px;line-height:13px;color:#808000;font-family:'Liberation Mono', monospace;">if</div>
<div class="t" style="left:362.00px;top:157.04px;font-size:13px;line-height:13px;color:#111;font-family:'Liberation Mono', monospace;">( EXECUTE_PREPROCESS )</div>
<div class="t" style="left:541.40px;top:157.04px;font-size:13px;line-height:13px;color:#808000;font-family:'Liberation Mono', monospace;">then</div>
<div class="t" style="left:234.61px;top:174.04px;font-size:13px;line-height:13px;color:#7c7c7c;font-family:'Liberation Mono', monospace;">309</div>
<div class="t" style="left:234.61px;top:191.04px;font-size:13px;line-height:13px;color:#7c7c7c;font-family:'Liberation Mono', monospace;">310</div>
<div class="t" style="left:338.60px;top:191.04px;font-size:13px;line-height:13px;color:#808000;font-family:'Liberation Mono', monospace;">if</div>
<div class="t" style="left:362.00px;top:191.04px;font-size:13px;line-height:13px;color:#111;font-family:'Liberation Mono', monospace;">( EXECUTE_MODEL )</div>
<div class="t" style="left:502.40px;top:191.04px;font-size:13px;line-height:13px;color:#808000;font-family:'Liberation Mono', monospace;">then</div>
<div class="t" style="left:234.61px;top:208.04px;font-size:13px;line-height:13px;color:#7c7c7c;font-weight:bold;font-family:'Liberation Mono', monospace;">311</div>
<div class="t" style="left:362.00px;top:208.04px;font-size:13px;line-height:13px;color:#808000;font-family:'Liberation Mono', monospace;">call</div>
<div class="t" style="left:401.00px;top:208.04px;font-size:13px;line-height:13px;color:#111;font-family:'Liberation Mono', monospace;">rm_driver( local_comm,</div>
<div class="t" style="left:666.20px;top:208.04px;font-size:13px;line-height:13px;color:#808000;font-family:'Liberation Mono', monospace;">&amp;</div>
<div class="t" style="left:681.80px;top:208.04px;font-size:13px;line-height:13px;color:#008000;font-family:'Liberation Mono', monospace;">! [IN]</div>
<div class="t" style="left:234.61px;top:225.04px;font-size:13px;line-height:13px;color:#7c7c7c;font-family:'Liberation Mono', monospace;">312</div>
<div class="t" style="left:486.80px;top:225.04px;font-size:13px;line-height:13px;color:#111;font-family:'Liberation Mono', monospace;">CONF_FILES(ID_DOMAIN),</div>
<div class="t" style="left:666.20px;top:225.04px;font-size:13px;line-height:13px;color:#808000;font-family:'Liberation Mono', monospace;">&amp;</div>
<div class="t" style="left:681.80px;top:225.04px;font-size:13px;line-height:13px;color:#008000;font-family:'Liberation Mono', monospace;">! [IN]</div>
<div class="t" style="left:234.61px;top:242.04px;font-size:13px;line-height:13px;color:#7c7c7c;font-family:'Liberation Mono', monospace;">313</div>
<div class="t" style="left:486.80px;top:242.04px;font-size:13px;line-height:13px;color:#111;font-family:'Liberation Mono', monospace;">path,</div>
<div class="t" style="left:666.20px;top:242.04px;font-size:13px;line-height:13px;color:#808000;font-family:'Liberation Mono', monospace;">&amp;</div>
<div class="t" style="left:681.80px;top:242.04px;font-size:13px;line-height:13px;color:#008000;font-family:'Liberation Mono', monospace;">! [IN]</div>
<div class="t" style="left:234.61px;top:259.04px;font-size:13px;line-height:13px;color:#7c7c7c;font-family:'Liberation Mono', monospace;">314</div>
<div class="t" style="left:486.80px;top:259.04px;font-size:13px;line-height:13px;color:#111;font-family:'Liberation Mono', monospace;">add_bulkjob_path</div>
<div class="t" style="left:666.20px;top:259.04px;font-size:13px;line-height:13px;color:#111;font-family:'Liberation Mono', monospace;">)</div>
<div class="t" style="left:681.80px;top:259.04px;font-size:13px;line-height:13px;color:#008000;font-family:'Liberation Mono', monospace;">! [IN]</div>
<div class="t" style="left:234.61px;top:276.04px;font-size:13px;line-height:13px;color:#7c7c7c;font-family:'Liberation Mono', monospace;">315</div>
<div class="t" style="left:338.60px;top:276.04px;font-size:13px;line-height:13px;color:#808000;font-family:'Liberation Mono', monospace;">endif</div>
<div class="t" style="left:234.61px;top:293.04px;font-size:13px;line-height:13px;color:#7c7c7c;font-family:'Liberation Mono', monospace;">316</div>
<div class="t" style="left:234.61px;top:310.04px;font-size:13px;line-height:13px;color:#7c7c7c;font-family:'Liberation Mono', monospace;">317</div>
<div class="t" style="left:338.60px;top:310.04px;font-size:13px;line-height:13px;color:#111;font-family:'Liberation Mono', monospace;">ID_BULKJOB</div>
<div class="t" style="left:424.40px;top:310.04px;font-size:13px;line-height:13px;color:#808000;font-family:'Liberation Mono', monospace;">=</div>
<div class="t" style="left:440.00px;top:310.04px;font-size:13px;line-height:13px;color:#111;font-family:'Liberation Mono', monospace;">ID_BULKJOB</div>
<div class="t" style="left:525.80px;top:310.04px;font-size:13px;line-height:13px;color:#808000;font-family:'Liberation Mono', monospace;">+</div>
<div class="t" style="left:541.40px;top:310.04px;font-size:13px;line-height:13px;color:#111;font-family:'Liberation Mono', monospace;">NUM_BULKJOB_ONCE</div>
<div class="t" style="left:234.61px;top:327.04px;font-size:13px;line-height:13px;color:#7c7c7c;font-family:'Liberation Mono', monospace;">318</div>
<div class="t" style="left:234.61px;top:344.04px;font-size:13px;line-height:13px;color:#7c7c7c;font-family:'Liberation Mono', monospace;">319</div>
<div class="t" style="left:315.20px;top:344.04px;font-size:13px;line-height:13px;color:#808000;font-family:'Liberation Mono', monospace;">end do</div>
<div class="t" style="left:234.61px;top:361.04px;font-size:13px;line-height:13px;color:#7c7c7c;font-family:'Liberation Mono', monospace;">320</div>
<div class="t" style="left:234.61px;top:378.04px;font-size:13px;line-height:13px;color:#7c7c7c;font-family:'Liberation Mono', monospace;">321</div>
<div class="t" style="left:315.20px;top:378.04px;font-size:13px;line-height:13px;color:#008000;font-family:'Liberation Mono', monospace;">! stop MPI</div>
<div class="t" style="left:234.61px;top:395.04px;font-size:13px;line-height:13px;color:#7c7c7c;font-family:'Liberation Mono', monospace;">322</div>
<div class="t" style="left:315.20px;top:395.04px;font-size:13px;line-height:13px;color:#808000;font-family:'Liberation Mono', monospace;">call</div>
<div class="t" style="left:354.20px;top:395.04px;font-size:13px;line-height:13px;color:#111;font-family:'Liberation Mono', monospace;">PRC_MPIfinish</div>
<div class="t" style="left:234.61px;top:412.04px;font-size:13px;line-height:13px;color:#7c7c7c;font-family:'Liberation Mono', monospace;">323</div>
<div class="t" style="left:234.61px;top:429.04px;font-size:13px;line-height:13px;color:#7c7c7c;font-family:'Liberation Mono', monospace;">324</div>
<div class="t" style="left:315.20px;top:429.04px;font-size:13px;line-height:13px;color:#808000;font-family:'Liberation Mono', monospace;">if(</div>
<div class="t" style="left:338.60px;top:429.04px;font-size:13px;line-height:13px;color:#111;font-family:'Liberation Mono', monospace;"> universal_master ) </div>
<div class="t" style="left:494.60px;top:429.04px;font-size:13px;line-height:13px;color:#2060a0;font-family:'Liberation Mono', monospace;">write(*,*)</div>
<div class="t" style="left:580.40px;top:429.04px;font-size:13px;line-height:13px;color:#008000;font-family:'Liberation Mono', monospace;">&#x27;*** End   Launch System for SCALE-RM&#x27;</div>
<svg style="left:268px;top:4px" width="8" height="10" viewBox="0 0 8 10"><path d="M1.5 1 L6 5 L1.5 9 Z" fill="#333"/></svg>
<svg style="left:268px;top:123px" width="8" height="10" viewBox="0 0 8 10"><path d="M1.5 1 L6 5 L1.5 9 Z" fill="#333"/></svg>
<svg style="left:268px;top:157px" width="8" height="10" viewBox="0 0 8 10"><path d="M1.5 1 L6 5 L1.5 9 Z" fill="#333"/></svg>
<svg style="left:266px;top:193px" width="10" height="8" viewBox="0 0 10 8"><path d="M1 1.5 L9 1.5 L5 6 Z" fill="#333"/></svg>
<div class="r" style="left:787px;top:2px;width:64px;height:15px;border:1px solid #222;border-radius:3px;box-sizing:border-box"></div>
<div class="t" style="left:803.00px;top:3.54px;font-size:13px;line-height:13px;color:#111;font-family:'Liberation Mono', monospace;">...f</div>
<div class="r" style="left:498px;top:121px;width:64px;height:15px;border:1px solid #222;border-radius:3px;box-sizing:border-box"></div>
<div class="t" style="left:514.00px;top:122.54px;font-size:13px;line-height:13px;color:#111;font-family:'Liberation Mono', monospace;">...f</div>
<div class="r" style="left:584px;top:155px;width:64px;height:15px;border:1px solid #222;border-radius:3px;box-sizing:border-box"></div>
<div class="t" style="left:600.00px;top:156.54px;font-size:13px;line-height:13px;color:#111;font-family:'Liberation Mono', monospace;">...f</div>
<div class="t" style="left:24.00px;top:208.04px;font-size:13px;line-height:13px;color:#8a8a8a;font-family:'Liberation Mono', monospace;letter-spacing:-0.047px;">8.3%</div>
<div class="r" style="left:57px;top:206px;width:169px;height:16px;background:#ececec;"></div>
<div class="r" style="left:57px;top:221px;width:168px;height:1px;background:#5aa05a;"></div>
<div class="t" style="left:16.00px;top:395.04px;font-size:13px;line-height:13px;color:#8a8a8a;font-family:'Liberation Mono', monospace;letter-spacing:0.003px;">&lt;0.1%</div>
<div class="r" style="left:57px;top:393px;width:169px;height:16px;background:#ececec;"></div>
</div>
<div class="r" style="left:1558px;top:358px;width:1px;height:440px;background:#c8c8c8;"></div>
<div class="r" style="left:1559px;top:358px;width:14px;height:440px;background:#f4f4f4;"></div>
<div class="r" style="left:1559px;top:372px;width:14px;height:1px;background:#c8c8c8;"></div>
<div class="r" style="left:1559px;top:373px;width:14px;height:358px;background:#e3e3e3;"></div>
<div class="r" style="left:1559px;top:731px;width:14px;height:1px;background:#cfcfcf;"></div>
<div class="r" style="left:1559px;top:773px;width:14px;height:10px;background:#e3e3e3;"></div>
<div class="r" style="left:1559px;top:773px;width:14px;height:1px;background:#cfcfcf;"></div>
<div class="r" style="left:1559px;top:783px;width:14px;height:1px;background:#cfcfcf;"></div>
<svg style="left:1559px;top:359px" width="14" height="13" viewBox="0 0 14 13"><path d="M3 9 L11 9 L7 5 Z" fill="#555"/></svg>
<svg style="left:1559px;top:784px" width="14" height="13" viewBox="0 0 14 13"><path d="M3 4 L11 4 L7 8 Z" fill="#555"/></svg>
<div class="r" style="left:0px;top:798px;width:1573px;height:1px;background:#a0a0a0;"></div>
<div class="r" style="left:0px;top:799px;width:1857px;height:1px;background:#f6f6f6;"></div>
<div class="r" style="left:1575px;top:556px;width:1px;height:1px;background:#a0a0a0;"></div>
<div class="r" style="left:1575px;top:559px;width:1px;height:1px;background:#a0a0a0;"></div>
<div class="r" style="left:1575px;top:562px;width:1px;height:1px;background:#a0a0a0;"></div>
<div class="r" style="left:1575px;top:565px;width:1px;height:1px;background:#a0a0a0;"></div>
<div class="r" style="left:1575px;top:568px;width:1px;height:1px;background:#a0a0a0;"></div>
<div class="r" style="left:1575px;top:571px;width:1px;height:1px;background:#a0a0a0;"></div>
<div class="t" style="left:1582.40px;top:329.99px;font-size:13px;line-height:13px;color:#111;letter-spacing:0.281px;">Time spent on line 311</div>
<svg style="left:1832px;top:330px" width="25" height="13" viewBox="0 0 25 13"><rect x="1.5" y="1.5" width="10" height="10" rx="1.5" fill="none" stroke="#777"/><rect x="4" y="5" width="4" height="4" fill="none" stroke="#777" stroke-width="0.8"/><rect x="5.5" y="3.5" width="4" height="4" fill="none" stroke="#777" stroke-width="0.8"/><rect x="15.5" y="1.5" width="10" height="10" rx="1.5" fill="none" stroke="#777"/><path d="M18 4 L23 9 M23 4 L18 9" stroke="#333" stroke-width="1.6"/></svg>
<div class="r" style="left:1578px;top:347px;width:290px;height:453px;border:1px solid #c4c4c4;box-sizing:border-box;background:#efefef"></div>
<div class="t" style="left:1588.50px;top:356.99px;font-size:13px;line-height:13px;color:#111;font-weight:bold;letter-spacing:0.682px;">Breakdown of the 8.3% time spent on</div>
<div class="t" style="left:1588.50px;top:371.49px;font-size:13px;line-height:13px;color:#111;font-weight:bold;letter-spacing:0.486px;">this line:</div>
<div class="t" style="left:1591.30px;top:394.79px;font-size:13px;line-height:13px;color:#111;letter-spacing:0.273px;">Executing instructions</div>
<div class="t" style="left:1752.00px;top:394.79px;font-size:13px;line-height:13px;color:#999;letter-spacing:-0.160px;">0.0%</div>
<div class="t" style="left:1591.30px;top:414.59px;font-size:13px;line-height:13px;color:#111;letter-spacing:0.205px;">Calling functions</div>
<div class="t" style="left:1737.40px;top:414.59px;font-size:13px;line-height:13px;color:#999;letter-spacing:-0.085px;">100.0%</div>
<div class="r" style="left:1785px;top:416px;width:65px;height:10px;background:#808080;"></div>
<div class="r" style="left:0px;top:831px;width:1857px;height:1px;background:#c4c4c4;"></div>
<div class="r" style="left:0px;top:808px;width:99.0px;height:24px;background:linear-gradient(#e6e6e6,#dcdcdc);border:1px solid #c4c4c4;border-bottom:none;border-radius:3px 3px 0 0;box-sizing:border-box"></div>
<div class="t" style="left:10.30px;top:813.99px;font-size:13px;line-height:13px;color:#111;letter-spacing:0.345px;">Input/Output</div>
<div class="r" style="left:99.8px;top:808px;width:94.8px;height:24px;background:linear-gradient(#e6e6e6,#dcdcdc);border:1px solid #c4c4c4;border-bottom:none;border-radius:3px 3px 0 0;box-sizing:border-box"></div>
<div class="t" style="left:111.00px;top:813.99px;font-size:13px;line-height:13px;color:#111;letter-spacing:-0.041px;">Project Files</div>
<div class="r" style="left:306px;top:808px;width:81.0px;height:24px;background:linear-gradient(#e6e6e6,#dcdcdc);border:1px solid #c4c4c4;border-bottom:none;border-radius:3px 3px 0 0;box-sizing:border-box"></div>
<div class="t" style="left:317.00px;top:813.99px;font-size:13px;line-height:13px;color:#111;letter-spacing:0.069px;">Functions</div>
<div class="r" style="left:387.7px;top:808px;width:74.9px;height:24px;background:linear-gradient(#e6e6e6,#dcdcdc);border:1px solid #c4c4c4;border-bottom:none;border-radius:3px 3px 0 0;box-sizing:border-box"></div>
<div class="t" style="left:399.00px;top:813.99px;font-size:13px;line-height:13px;color:#111;letter-spacing:0.125px;">Libraries</div>
<div class="r" style="left:196px;top:806px;width:110px;height:26px;background:#efefef;border:1px solid #c4c4c4;border-bottom:none;border-radius:3px 3px 0 0;box-sizing:border-box"></div>
<div class="t" style="left:207.50px;top:812.99px;font-size:13px;line-height:13px;color:#111;letter-spacing:0.052px;">Thread Stacks</div>
<div class="t" style="left:2.60px;top:835.99px;font-size:13px;line-height:13px;color:#111;letter-spacing:0.013px;">Thread Stacks</div>
<svg style="left:1832px;top:836px" width="25" height="13" viewBox="0 0 25 13"><rect x="1.5" y="1.5" width="10" height="10" rx="1.5" fill="none" stroke="#777"/><rect x="4" y="5" width="4" height="4" fill="none" stroke="#777" stroke-width="0.8"/><rect x="5.5" y="3.5" width="4" height="4" fill="none" stroke="#777" stroke-width="0.8"/><rect x="15.5" y="1.5" width="10" height="10" rx="1.5" fill="none" stroke="#777"/><path d="M18 4 L23 9 M23 4 L18 9" stroke="#333" stroke-width="1.6"/></svg>
<div class="r" style="left:0px;top:852px;width:1857px;height:1px;background:#b8b8b8;"></div>
<div class="r" style="left:0px;top:872px;width:1846px;height:216px;background:#ffffff;"></div>
<div class="r" style="left:0;top:853px;width:1846px;height:19px;background:linear-gradient(#fbfbfb,#ebebeb);border-bottom:1px solid #b8b8b8;box-sizing:border-box"></div>
<div class="r" style="left:225px;top:853px;width:1px;height:18px;background:#d0d0d0;"></div>
<div class="r" style="left:277px;top:853px;width:1px;height:18px;background:#d0d0d0;"></div>
<div class="r" style="left:346px;top:853px;width:1px;height:18px;background:#d0d0d0;"></div>
<div class="r" style="left:629px;top:853px;width:1px;height:18px;background:#d0d0d0;"></div>
<div class="r" style="left:1493px;top:853px;width:1px;height:18px;background:#d0d0d0;"></div>
<div class="r" style="left:1682px;top:853px;width:1px;height:18px;background:#d0d0d0;"></div>
<div class="t" style="left:2.00px;top:855.99px;font-size:13px;line-height:13px;color:#111;letter-spacing:0.264px;">Total core time</div>
<div class="t" style="left:229.00px;top:855.99px;font-size:13px;line-height:13px;color:#111;letter-spacing:-0.870px;">MPI</div>
<div class="t" style="left:280.00px;top:855.99px;font-size:13px;line-height:13px;color:#111;letter-spacing:0.174px;">Overhead</div>
<div class="t" style="left:349.00px;top:855.99px;font-size:13px;line-height:13px;color:#111;letter-spacing:0.160px;">Function(s) on line</div>
<div class="t" style="left:632.40px;top:855.99px;font-size:13px;line-height:13px;color:#111;letter-spacing:-0.034px;">Source</div>
<div class="t" style="left:1496.80px;top:855.99px;font-size:13px;line-height:13px;color:#111;letter-spacing:-0.083px;">Position</div>
<div class="t" style="left:1685.00px;top:855.99px;font-size:13px;line-height:13px;color:#111;letter-spacing:0.250px;">Library</div>
<svg style="left:212px;top:857px" width="10" height="7" viewBox="0 0 10 7"><path d="M1.5 5.5 L8.5 5.5 L5 1.5 Z" fill="#444"/></svg>
<div class="r" style="left:1845px;top:853px;width:12px;height:238px;background:#f2f2f2;"></div>
<div class="r" style="left:1845px;top:853px;width:1px;height:238px;background:#c8c8c8;"></div>
<div class="r" style="left:1846px;top:870px;width:11px;height:46px;background:#e3e3e3;"></div>
<div class="r" style="left:1846px;top:983px;width:11px;height:94px;background:#e3e3e3;"></div>
<div class="r" style="left:1846px;top:916px;width:11px;height:1px;background:#cfcfcf;"></div>
<div class="r" style="left:1846px;top:983px;width:11px;height:1px;background:#cfcfcf;"></div>
<div class="r" style="left:1846px;top:1077px;width:11px;height:1px;background:#cfcfcf;"></div>
<div class="r" style="left:1846px;top:870px;width:11px;height:1px;background:#cfcfcf;"></div>
<svg style="left:1846px;top:856px" width="11" height="12" viewBox="0 0 11 12"><path d="M2 8 L9 8 L5.5 4.5 Z" fill="#555"/></svg>
<svg style="left:1846px;top:1078px" width="11" height="12" viewBox="0 0 11 12"><path d="M2 4 L9 4 L5.5 7.5 Z" fill="#555"/></svg>
<div class="r" style="left:347px;top:872px;width:1498px;height:18px;background:#308cc6;"></div>
<div class="r" style="left:0;top:872px;width:1845px;height:216px;overflow:hidden">
<svg style="left:377px;top:5px" width="10" height="8" viewBox="0 0 10 8"><path d="M1 2 L9 2 L5 6.5 Z" fill="#1c3550"/></svg>
<div class="t" style="left:390.00px;top:2.99px;font-size:13px;line-height:13px;color:#ffffff;letter-spacing:0.243px;">mod_rm_driver::rm_driver</div>
<div class="t" style="left:633.60px;top:4.04px;font-size:13px;line-height:13px;color:#ffffff;font-family:'Liberation Mono', monospace;">call rm_driver( local_comm, &amp; ! [IN]</div>
<div class="t" style="left:1497.50px;top:2.99px;font-size:13px;line-height:13px;color:#ffffff;letter-spacing:0.172px;">mod_launcher.F90:311</div>
<div class="t" style="left:1686.50px;top:2.99px;font-size:13px;line-height:13px;color:#ffffff;letter-spacing:0.082px;">scale-rm</div>
<div class="r" style="left:56px;top:19px;width:168px;height:16px;background:#ececec;"></div>
<svg style="left:57px;top:33px" width="166" height="2" viewBox="0 0 166 2"><path d="M0 1 H30 M36 1 H60 M65 1 H97 M102 1 H125 M130 1 H150 M158 1 H166" stroke="#3a9a3a" stroke-width="1.2" stroke-dasharray="2 2"/></svg>
<div class="t" style="left:23.26px;top:20.99px;font-size:13px;line-height:13px;color:#111;">6.1%</div>
<div class="t" style="left:229.70px;top:20.99px;font-size:13px;line-height:13px;color:#5050b0;letter-spacing:-0.160px;">3.9%</div>
<div class="t" style="left:282.00px;top:20.99px;font-size:13px;line-height:13px;color:#999;letter-spacing:0.353px;">&lt;0.1%</div>
<svg style="left:390px;top:22px" width="6" height="10" viewBox="0 0 6 10"><path d="M1 1.5 L5 5 L1 8.5 Z" fill="#333"/></svg>
<div class="t" style="left:400.30px;top:20.99px;font-size:13px;line-height:13px;color:#111;letter-spacing:0.030px;">mod_atmos_driver::ATMOS_driver_...</div>
<div class="t" style="left:633.60px;top:22.04px;font-size:13px;line-height:13px;color:#111;font-family:'Liberation Mono', monospace;">if( ATMOS_do .AND. TIME_DOATMOS_step ) call ATMOS_driver_update</div>
<div class="t" style="left:1497.50px;top:20.99px;font-size:13px;line-height:13px;color:#111;letter-spacing:0.131px;">mod_rm_driver.F90:539</div>
<div class="t" style="left:1686.50px;top:20.99px;font-size:13px;line-height:13px;color:#111;letter-spacing:0.082px;">scale-rm</div>
<div class="r" style="left:56px;top:37px;width:168px;height:16px;background:#ececec;"></div>
<div class="t" style="left:23.26px;top:38.99px;font-size:13px;line-height:13px;color:#111;">1.4%</div>
<div class="t" style="left:229.70px;top:38.99px;font-size:13px;line-height:13px;color:#5050b0;letter-spacing:0.413px;">&lt;0.1%</div>
<svg style="left:390px;top:40px" width="6" height="10" viewBox="0 0 6 10"><path d="M1 1.5 L5 5 L1 8.5 Z" fill="#333"/></svg>
<div class="t" style="left:400.30px;top:38.99px;font-size:13px;line-height:13px;color:#111;letter-spacing:0.027px;">mod_atmos_driver::ATMOS_driver_c...</div>
<div class="t" style="left:633.60px;top:40.04px;font-size:13px;line-height:13px;color:#111;font-family:'Liberation Mono', monospace;">if( ATMOS_do .AND. TIME_DOATMOS_step ) call ATMOS_driver_calc_tendency( force = .false. )</div>
<div class="t" style="left:1497.50px;top:38.99px;font-size:13px;line-height:13px;color:#111;letter-spacing:0.131px;">mod_rm_driver.F90:552</div>
<div class="t" style="left:1686.50px;top:38.99px;font-size:13px;line-height:13px;color:#111;letter-spacing:0.082px;">scale-rm</div>
<div class="r" style="left:56px;top:55px;width:168px;height:16px;background:#ececec;"></div>
<div class="t" style="left:23.26px;top:56.99px;font-size:13px;line-height:13px;color:#111;">0.8%</div>
<div class="t" style="left:229.70px;top:56.99px;font-size:13px;line-height:13px;color:#b4b4e4;letter-spacing:0.413px;">&lt;0.1%</div>
<div class="t" style="left:282.00px;top:56.99px;font-size:13px;line-height:13px;color:#cccccc;letter-spacing:0.353px;">&lt;0.1%</div>
<svg style="left:390px;top:58px" width="6" height="10" viewBox="0 0 6 10"><path d="M1 1.5 L5 5 L1 8.5 Z" fill="#333"/></svg>
<div class="t" style="left:400.30px;top:56.99px;font-size:13px;line-height:13px;color:#111;letter-spacing:0.165px;">21 others</div>
<div class="r" style="left:56px;top:73px;width:168px;height:16px;background:#ececec;"></div>
<div class="t" style="left:15.67px;top:74.99px;font-size:13px;line-height:13px;color:#111;">&lt;0.1%</div>
<div class="t" style="left:229.70px;top:74.99px;font-size:13px;line-height:13px;color:#b4b4e4;letter-spacing:0.413px;">&lt;0.1%</div>
<svg style="left:380px;top:76px" width="6" height="10" viewBox="0 0 6 10"><path d="M1 1.5 L5 5 L1 8.5 Z" fill="#333"/></svg>
<div class="t" style="left:390.00px;top:74.99px;font-size:13px;line-height:13px;color:#111;letter-spacing:0.317px;">1 other</div>
<div class="r" style="left:56px;top:91px;width:168px;height:16px;background:#ececec;"></div>
<div class="t" style="left:15.67px;top:92.99px;font-size:13px;line-height:13px;color:#111;">&lt;0.1%</div>
<div class="t" style="left:229.70px;top:92.99px;font-size:13px;line-height:13px;color:#b4b4e4;letter-spacing:0.413px;">&lt;0.1%</div>
<svg style="left:370px;top:94px" width="6" height="10" viewBox="0 0 6 10"><path d="M1 1.5 L5 5 L1 8.5 Z" fill="#333"/></svg>
<div class="t" style="left:380.70px;top:92.99px;font-size:13px;line-height:13px;color:#111;letter-spacing:0.164px;">4 others</div>
<svg style="left:358px;top:113px" width="10" height="8" viewBox="0 0 10 8"><path d="M1 2 L9 2 L5 6.5 Z" fill="#333"/></svg>
<svg style="left:373px;top:109px" width="14" height="16" viewBox="0 0 14 16"><path d="M2 14 L12 2" stroke="#9ab" stroke-width="2.4" stroke-linecap="round"/><path d="M5 10.5 L9 5.5" stroke="#f08a24" stroke-width="3" stroke-linecap="round"/></svg>
<div class="t" style="left:392.00px;top:110.99px;font-size:13px;line-height:13px;color:#111;letter-spacing:0.074px;">progress_engine</div>
<div class="r" style="left:56px;top:127px;width:168px;height:16px;background:#ececec;"></div>
<div class="t" style="left:15.67px;top:128.99px;font-size:13px;line-height:13px;color:#111;">&lt;0.1%</div>
<svg style="left:370px;top:130px" width="6" height="10" viewBox="0 0 6 10"><path d="M1 1.5 L5 5 L1 8.5 Z" fill="#333"/></svg>
<div class="t" style="left:380.00px;top:128.99px;font-size:13px;line-height:13px;color:#111;letter-spacing:0.048px;">event_base_loop</div>
<div class="t" style="left:633.60px;top:130.04px;font-size:13px;line-height:13px;color:#111;font-family:'Liberation Mono', monospace;">progress_engine (no debug info)</div>
<div class="t" style="left:1686.50px;top:128.99px;font-size:13px;line-height:13px;color:#111;letter-spacing:0.244px;">libmpi.so.0.0.0</div>
<svg style="left:358px;top:149px" width="10" height="8" viewBox="0 0 10 8"><path d="M1 2 L9 2 L5 6.5 Z" fill="#333"/></svg>
<svg style="left:373px;top:145px" width="14" height="16" viewBox="0 0 14 16"><path d="M2 14 L12 2" stroke="#9ab" stroke-width="2.4" stroke-linecap="round"/><path d="M5 10.5 L9 5.5" stroke="#f08a24" stroke-width="3" stroke-linecap="round"/></svg>
<div class="t" style="left:392.00px;top:146.99px;font-size:13px;line-height:13px;color:#111;letter-spacing:0.573px;">&lt;unknown&gt; [multiple frames]</div>
<svg style="left:368px;top:167px" width="10" height="8" viewBox="0 0 10 8"><path d="M1 2 L9 2 L5 6.5 Z" fill="#333"/></svg>
<div class="t" style="left:380.00px;top:164.99px;font-size:13px;line-height:13px;color:#111;letter-spacing:0.067px;">scale_bulkflux::calc_scales_B91W01</div>
<div class="t" style="left:633.60px;top:166.04px;font-size:13px;line-height:13px;color:#111;font-family:'Liberation Mono', monospace;">&lt;unknown&gt; [multiple frames] (no debug info)</div>
<div class="r" style="left:56px;top:181px;width:168px;height:16px;background:#ececec;"></div>
<div class="t" style="left:15.67px;top:182.99px;font-size:13px;line-height:13px;color:#111;">&lt;0.1%</div>
<svg style="left:380px;top:184px" width="6" height="10" viewBox="0 0 6 10"><path d="M1 1.5 L5 5 L1 8.5 Z" fill="#333"/></svg>
<div class="t" style="left:390.00px;top:182.99px;font-size:13px;line-height:13px;color:#111;letter-spacing:0.233px;">scale_bulkflux::fhm_unstable</div>
<div class="t" style="left:633.60px;top:184.04px;font-size:13px;line-height:13px;color:#111;font-family:'Liberation Mono', monospace;">denoE = log_Z1ovZ0E &amp;</div>
<div class="t" style="left:1497.50px;top:182.99px;font-size:13px;line-height:13px;color:#111;letter-spacing:0.154px;">scale_bulkflux.F90:1039</div>
<div class="t" style="left:1686.50px;top:182.99px;font-size:13px;line-height:13px;color:#111;letter-spacing:0.082px;">scale-rm</div>
<div class="r" style="left:56px;top:199px;width:168px;height:16px;background:#ececec;"></div>
<div class="t" style="left:15.67px;top:200.99px;font-size:13px;line-height:13px;color:#111;">&lt;0.1%</div>
<svg style="left:380px;top:202px" width="6" height="10" viewBox="0 0 6 10"><path d="M1 1.5 L5 5 L1 8.5 Z" fill="#333"/></svg>
<div class="t" style="left:390.00px;top:200.99px;font-size:13px;line-height:13px;color:#111;letter-spacing:0.233px;">scale_bulkflux::fhm_unstable</div>
<div class="t" style="left:633.60px;top:202.04px;font-size:13px;line-height:13px;color:#111;font-family:'Liberation Mono', monospace;">denoH = log_Z1ovZ0H &amp;</div>
<div class="t" style="left:1497.50px;top:200.99px;font-size:13px;line-height:13px;color:#111;letter-spacing:0.154px;">scale_bulkflux.F90:1036</div>
<div class="t" style="left:1686.50px;top:200.99px;font-size:13px;line-height:13px;color:#111;letter-spacing:0.082px;">scale-rm</div>
</div>
<div class="r" style="left:0px;top:1090px;width:1857px;height:1px;background:#c4c4c4;"></div>
<div class="r" style="left:0px;top:1091px;width:1857px;height:20px;background:#efefef;"></div>
<div class="t" style="left:4.50px;top:1095.49px;font-size:13px;line-height:13px;color:#111;letter-spacing:0.274px;">Showing data from 8,000 samples taken over 8 processes (1000 per process, each representing ~ 0.26s wallclock time)</div>
<div class="t" style="left:1375.30px;top:1095.49px;font-size:13px;line-height:13px;color:#aaaaaa;letter-spacing:0.079px;">Linaro Forge 23.1.2</div>
<div class="t" style="left:1498.30px;top:1095.49px;font-size:13px;line-height:13px;color:#111;letter-spacing:0.344px;">Connected to: (via tunnel) fn01sv01:4201 -&gt; b27-5206c</div>
</body></html>
